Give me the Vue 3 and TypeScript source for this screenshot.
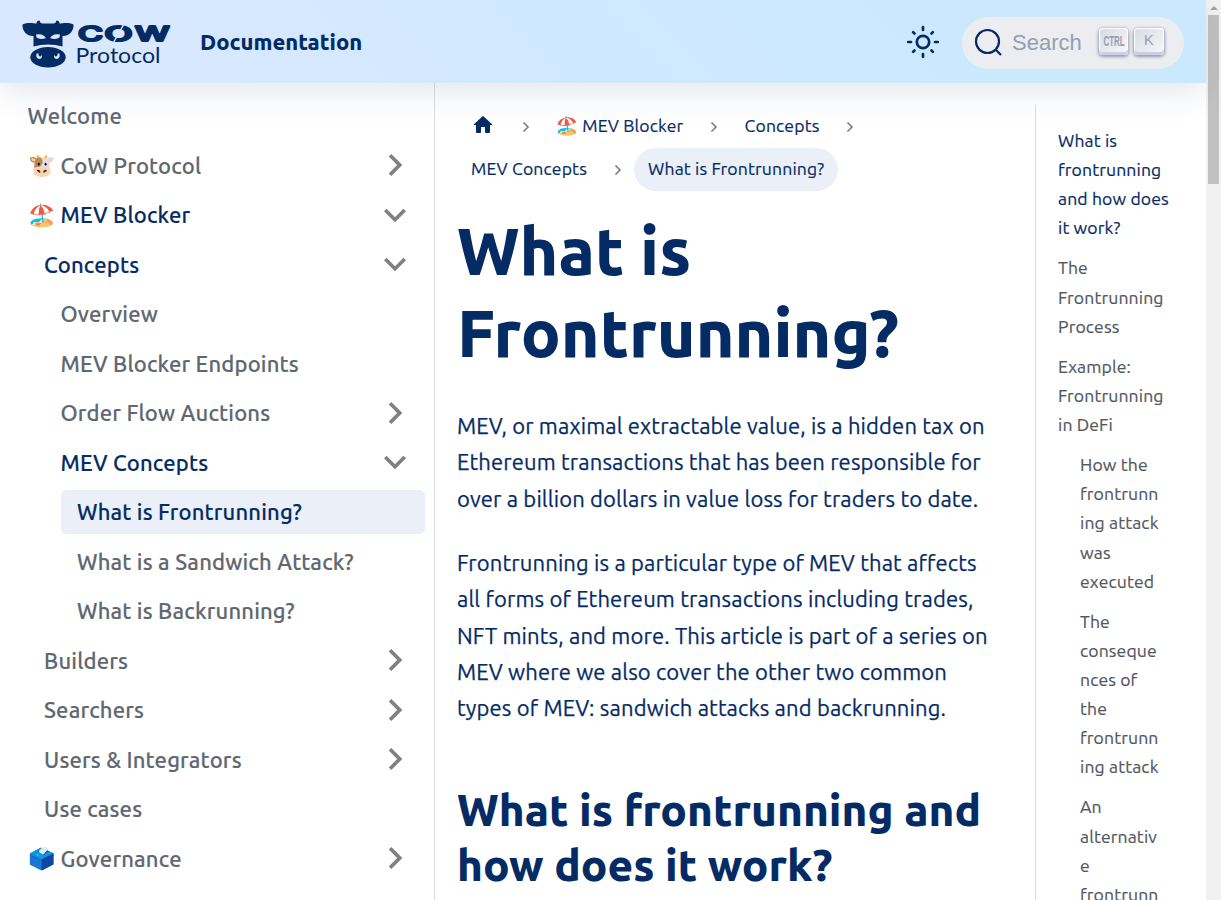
<script setup lang="ts">
interface NavItem {
  label: string
  level: number
  icon?: string
  arrow?: 'right' | 'down'
  state?: 'open' | 'current'
}
interface TocEntry {
  lines: string[]
  nested?: boolean
  active?: boolean
}

const nav: NavItem[] = [
  { label: 'Welcome', level: 0 },
  { label: 'CoW Protocol', level: 0, icon: '🐮', arrow: 'right' },
  { label: 'MEV Blocker', level: 0, icon: '🏖️', arrow: 'down', state: 'open' },
  { label: 'Concepts', level: 1, arrow: 'down', state: 'open' },
  { label: 'Overview', level: 2 },
  { label: 'MEV Blocker Endpoints', level: 2 },
  { label: 'Order Flow Auctions', level: 2, arrow: 'right' },
  { label: 'MEV Concepts', level: 2, arrow: 'down', state: 'open' },
  { label: 'What is Frontrunning?', level: 3, state: 'current' },
  { label: 'What is a Sandwich Attack?', level: 3 },
  { label: 'What is Backrunning?', level: 3 },
  { label: 'Builders', level: 1, arrow: 'right' },
  { label: 'Searchers', level: 1, arrow: 'right' },
  { label: 'Users & Integrators', level: 1, arrow: 'right' },
  { label: 'Use cases', level: 1 },
  { label: 'Governance', level: 0, icon: '🗳️', arrow: 'right' },
]

const title = ['What is', 'Frontrunning?']
const paragraphs = [
  [
    'MEV, or maximal extractable value, is a hidden tax on',
    'Ethereum transactions that has been responsible for',
    'over a billion dollars in value loss for traders to date.',
  ],
  [
    'Frontrunning is a particular type of MEV that affects',
    'all forms of Ethereum transactions including trades,',
    'NFT mints, and more. This article is part of a series on',
    'MEV where we also cover the other two common',
    'types of MEV: sandwich attacks and backrunning.',
  ],
]
const subtitle = ['What is frontrunning and', 'how does it work?']

const toc: TocEntry[] = [
  { active: true, lines: ['What is', 'frontrunning', 'and how does', 'it work?'] },
  { lines: ['The', 'Frontrunning', 'Process'] },
  { lines: ['Example:', 'Frontrunning', 'in DeFi'] },
  { nested: true, lines: ['How the', 'frontrunn', 'ing attack', 'was', 'executed'] },
  { nested: true, lines: ['The', 'conseque', 'nces of', 'the', 'frontrunn', 'ing attack'] },
  { nested: true, lines: ['An', 'alternativ', 'e', 'frontrunn'] },
]

const rays = [0, 45, 90, 135, 180, 225, 270, 315]
</script>

<template>
  <div class="page">
    <header class="navbar">
      <svg class="logo" viewBox="0 0 150 50" width="150" height="50">
        <path
          d="M.5 4.5C6 2 12 3.5 14.500 3.500C14.500 1.500 15.500.500 17.500.500C18 2 18.500 3 20 3.500H32C33.500 3 34 2 34.500.500C36.500.500 37.500 1.500 37.500 3.500C40 3.500 46 2 51.500 4.500C52 12 46 16.500 40.500 16V26.500Q26 22.500 11.500 26.500V16C6 16.500 0 12 .5 4.500Z"
        />
        <ellipse cx="26" cy="37.300" rx="17.700" ry="10.200" />
        <path class="cut" d="M14 14.500Q21 13 24 18Q18 20 14.500 17.500ZM38 14.500Q31 13 28 18Q34 20 37.500 17.500Z" />
        <path class="cut" d="M14.500 33.500Q13.500 38.500 17.500 39Q21 38 19.500 35L18.500 36.500Q16 36 16.500 33.500ZM37.500 33.500Q38.500 38.500 34.500 39Q31 38 32.500 35L33.500 36.500Q36 36 35.500 33.500Z" />
        <g class="mark">
          <text x="56" y="20.800" textLength="25" lengthAdjust="spacingAndGlyphs">C</text>
          <text x="82.500" y="20.800" textLength="28" lengthAdjust="spacingAndGlyphs">O</text>
          <text x="113" y="20.800" textLength="34.500" lengthAdjust="spacingAndGlyphs">W</text>
        </g>
        <path class="slit" d="M91.500 22.500L102 4" />
        <text class="word" x="53.500" y="43" textLength="85" lengthAdjust="spacingAndGlyphs">Protocol</text>
      </svg>
      <span class="nav-link">Documentation</span>
      <svg class="sun" viewBox="-17 -17 34 34" width="34" height="34">
        <circle r="6.200" />
        <path v-for="r in rays" :key="r" :transform="`rotate(${r})`" :d="r % 90 ? 'M0-12V-14' : 'M0-12V-14.800'" />
      </svg>
      <div class="search">
        <svg class="glass" viewBox="0 0 30 30" width="30" height="30">
          <circle cx="13.500" cy="13.500" r="11.500" />
          <path d="M21.500 21.500L27 27" />
        </svg>
        <span class="placeholder">Search</span>
        <span class="key">
          <svg width="30" height="26" viewBox="0 0 30 26">
            <g transform="scale(.56 1)">
              <text class="ctrl" x="8" y="18">CTRL</text>
            </g>
          </svg>
        </span>
        <span class="key">K</span>
      </div>
    </header>

    <div class="body">
      <nav class="sidebar">
        <div v-for="item in nav" :key="item.label" class="item" :class="['level-' + item.level, item.state]">
          <span v-if="item.icon" class="emoji">{{ item.icon }}</span>
          <span class="label">{{ item.label }}</span>
          <svg v-if="item.arrow" class="caret" :class="item.arrow" viewBox="0 0 24 24" width="44" height="44">
            <path d="M8.590 16.590L13.170 12 8.590 7.410 10 6l6 6-6 6z" />
          </svg>
        </div>
      </nav>

      <main class="content">
        <div class="crumbs">
          <span class="crumb home">
            <svg viewBox="0 0 24 24" width="24" height="24">
              <path d="M10 19v-5h4v5c0 .55.45 1 1 1h3c.55 0 1-.45 1-1v-7h1.700c.46 0 .68-.57.33-.87L12.670 3.600c-.38-.34-.96-.34-1.340 0l-8.360 7.530c-.34.300-.13.870.33.870H5v7c0 .55.45 1 1 1h3c.55 0 1-.45 1-1z" />
            </svg>
          </span>
          <svg class="sep" viewBox="0 0 10 14" width="10" height="14"><path d="M2.500 2.500L7 7L2.500 11.500" /></svg>
          <span class="crumb"><span class="emoji small">🏖️</span>MEV Blocker</span>
          <svg class="sep" viewBox="0 0 10 14" width="10" height="14"><path d="M2.500 2.500L7 7L2.500 11.500" /></svg>
          <span class="crumb">Concepts</span>
          <svg class="sep" viewBox="0 0 10 14" width="10" height="14"><path d="M2.500 2.500L7 7L2.500 11.500" /></svg>
        </div>
        <div class="crumbs">
          <span class="crumb">MEV Concepts</span>
          <svg class="sep" viewBox="0 0 10 14" width="10" height="14"><path d="M2.500 2.500L7 7L2.500 11.500" /></svg>
          <span class="crumb here">What is Frontrunning?</span>
        </div>

        <h1>
          <span v-for="l in title" :key="l" class="row">{{ l }}</span>
        </h1>
        <p v-for="(p, i) in paragraphs" :key="i">
          <span v-for="l in p" :key="l" class="row">{{ l }}</span>
        </p>
        <h2>
          <span v-for="l in subtitle" :key="l" class="row">{{ l }}</span>
        </h2>
      </main>

      <aside class="toc">
        <div v-for="(t, i) in toc" :key="i" class="entry" :class="{ nested: t.nested, active: t.active }">
          <span v-for="l in t.lines" :key="l" class="row">{{ l }}</span>
        </div>
      </aside>
    </div>

    <div class="scrollbar">
      <span class="up"></span>
      <span class="thumb"></span>
    </div>
  </div>
</template>

<style>
body {
  overflow: hidden;
}
</style>

<style scoped>
.page {
  position: relative;
  width: 1221px;
  height: 900px;
  overflow: hidden;
  background: #fff;
  color: #052b65;
  font-family: Ubuntu, 'Noto Sans', 'Open Sans', sans-serif;
  font-size: 22px;
}
.page * {
  box-sizing: border-box;
}
.navbar {
  position: relative;
  z-index: 2;
  display: flex;
  align-items: center;
  width: 1206px;
  height: 83px;
  padding: 0 22px;
  background: linear-gradient(45deg, #dbe8ff 0%, #cae9ff 75%, #cae9ff 100%);
  box-shadow: 0 16px 32px rgba(5, 43, 101, 0.06), 0 8px 20px rgba(30, 40, 80, 0.04);
}
.logo {
  flex: none;
  margin-top: 7px;
  fill: #052b65;
}
.cut {
  fill: #dae8ff;
}
.slit {
  stroke: #d9e8ff;
  stroke-width: 1.500;
}
.mark {
  font: 500 19.500px Inter, sans-serif;
  stroke: #052b65;
  stroke-width: 2;
  stroke-linejoin: round;
}
.word {
  font: 400 21.500px Lato, sans-serif;
}
.nav-link {
  width: 180px;
  margin-left: 28px;
  font-weight: 800;
  white-space: nowrap;
}
.sun {
  margin-left: 526px;
  fill: none;
  stroke: #052b65;
  stroke-width: 2.700;
  stroke-linecap: round;
}
.search {
  display: flex;
  align-items: center;
  width: 222px;
  height: 52px;
  margin: 3px 0 0 22px;
  padding-left: 12px;
  border-radius: 26px;
  background: #ebedf0;
  color: #969faf;
}
.glass {
  flex: none;
  fill: none;
  stroke: #052b65;
  stroke-width: 2.200;
}
.placeholder {
  width: 86.500px;
  margin-left: 8px;
  font: 22px 'Liberation Sans', sans-serif;
}
.key {
  display: flex;
  flex: none;
  justify-content: center;
  width: 29.500px;
  height: 27px;
  margin: -3px 6px 0 0;
  border-radius: 4px;
  background: linear-gradient(-225deg, #d5dbe4, #f8f8f8);
  box-shadow: inset 0 -3px 0 0 #cdcde6, inset 0 0 1px 1px #fff, 0 1px 3px 1px rgba(30, 35, 90, 0.4);
  font: 14.500px/24px 'Liberation Sans', sans-serif;
}
.ctrl {
  font: 700 14.500px 'Liberation Sans', sans-serif;
  fill: #969faf;
}
.body {
  display: flex;
  width: 1206px;
  height: 817px;
}
.sidebar {
  flex: none;
  width: 435px;
  padding: 10.500px 9px 0 11px;
  border-right: 1px solid #dadde1;
}
.item {
  display: flex;
  align-items: center;
  height: 44px;
  margin-bottom: 5.530px;
  padding: 0 8.500px 0 16.500px;
  border-radius: 5.500px;
  color: #606770;
  font-weight: 500;
  white-space: nowrap;
}
.label {
  letter-spacing: 0.008em;
  -webkit-text-stroke: 0.150px currentColor;
}
.level-1 {
  margin-left: 16.500px;
}
.level-2 {
  margin-left: 33px;
}
.level-3 {
  margin-left: 49.500px;
}
.open,
.current {
  color: #052b65;
}
.current {
  background: #ebf0f8;
}
.emoji {
  flex: none;
  width: 33px;
  font-size: 22px;
  letter-spacing: 0;
}
.emoji.small {
  width: 26px;
  font-size: 17.600px;
}
.caret {
  flex: none;
  margin: 0 0 0 auto;
  fill: #808080;
}
.down {
  transform: rotate(90deg);
}
.content {
  flex: none;
  width: 600px;
  padding: 22px 22px 0;
}
.crumbs {
  display: flex;
  align-items: center;
  height: 43px;
  font-size: 17.600px;
  letter-spacing: 0.008em;
  -webkit-text-stroke: 0.200px currentColor;
  white-space: nowrap;
}
.crumb {
  display: flex;
  align-items: center;
  height: 43px;
  padding: 0 14.080px 1.500px;
  border-radius: 22px;
}
.home svg {
  margin-top: -1.500px;
  fill: #052b65;
}
.sep {
  margin: 0 11.500px;
  fill: none;
  stroke: #808080;
  stroke-width: 1.700;
}
.here {
  background: #ebf0f8;
}
.row {
  display: block;
  white-space: nowrap;
}
h1 {
  margin: 17.500px 0 34.500px;
  font-size: 66px;
  font-weight: 800;
  line-height: 82.500px;
}
p {
  margin: 0 0 27.500px;
  letter-spacing: 0.0064em;
  line-height: 36.400px;
  -webkit-text-stroke: 0.250px currentColor;
}
h2 {
  margin: 55px 0 0;
  font-size: 44px;
  font-weight: 800;
  line-height: 55px;
}
.toc {
  width: 148px;
  height: 795px;
  margin-top: 22px;
  padding: 21px 0 0 22px;
  border-left: 1px solid #dadde1;
  overflow: hidden;
}
.entry {
  margin-bottom: 11.300px;
  color: #525860;
  font-size: 17.600px;
  letter-spacing: 0.007em;
  line-height: 29.040px;
  -webkit-text-stroke: 0.200px currentColor;
}
.nested {
  margin-left: 22px;
}
.active {
  color: #052b65;
}
.scrollbar {
  position: absolute;
  top: 0;
  right: 0;
  display: flex;
  flex-direction: column;
  align-items: center;
  width: 15px;
  height: 900px;
  background: #f1f1f1;
}
.up {
  margin: 6px 0 5px;
  border: 4px solid transparent;
  border-top: 0;
  border-bottom-color: #a3a3a3;
}
.thumb {
  width: 11px;
  height: 169px;
  background: #c1c1c1;
}
</style>
